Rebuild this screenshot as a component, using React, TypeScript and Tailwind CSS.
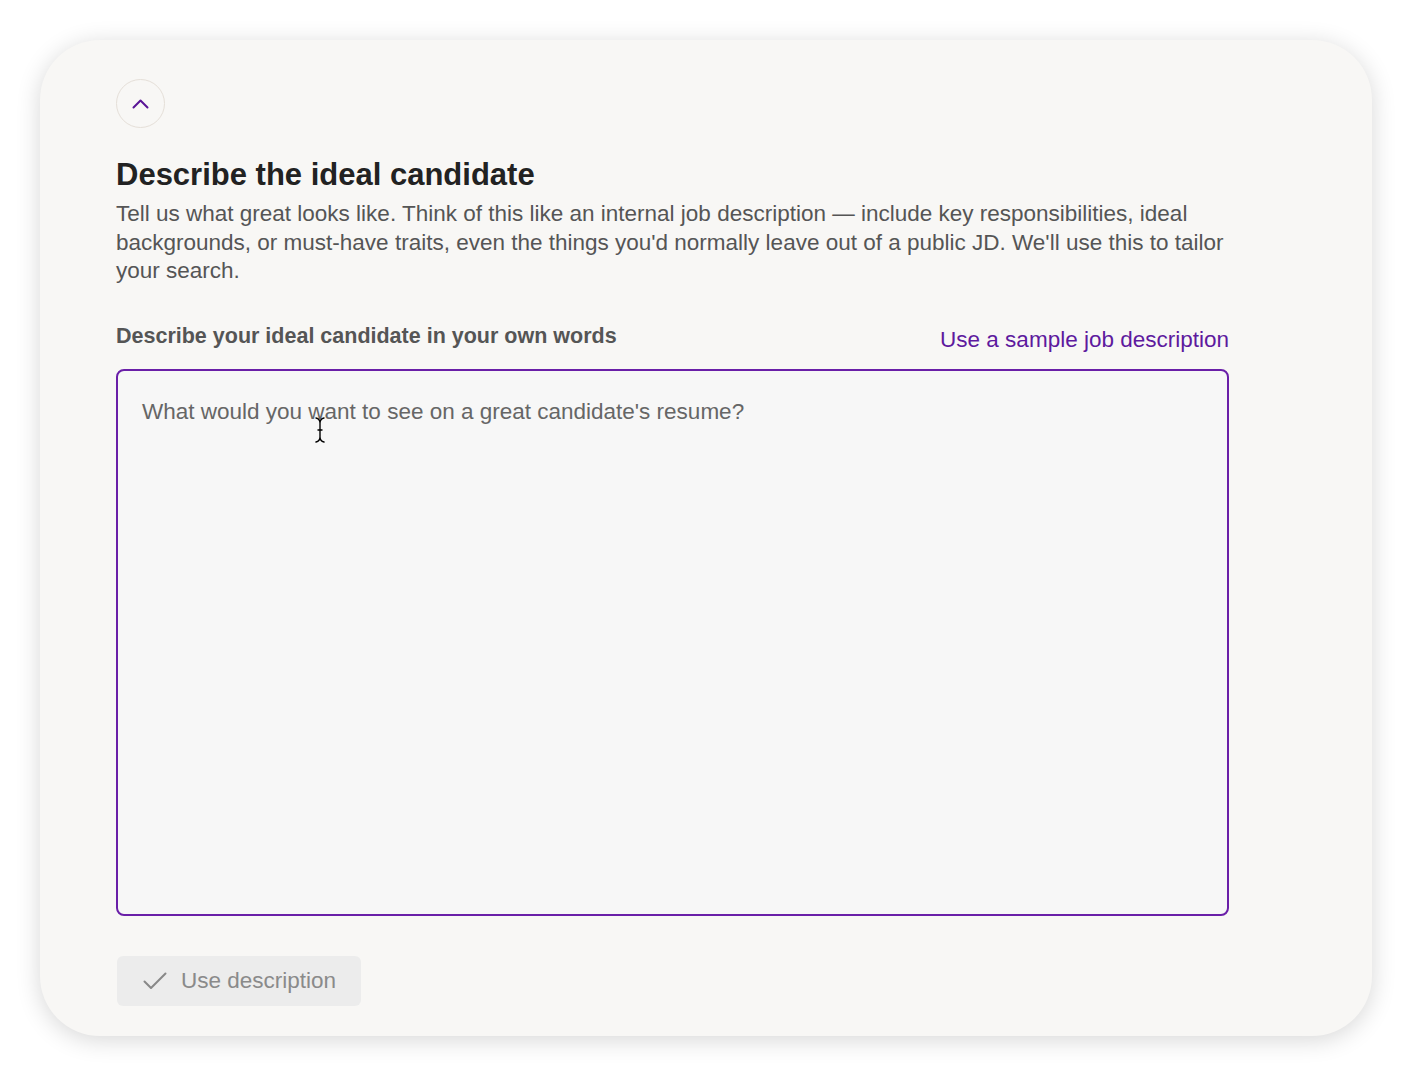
import React from "react";

export default function App() {
  return (
    <div className="min-h-[1076px] w-[1412px] bg-white p-[40px]" style={{ fontFamily: '"Liberation Sans", Arial, sans-serif' }}>
      <div className="relative h-[996px] w-[1332px] rounded-[60px] bg-[#f8f7f5] pl-[76px] pt-[39px] shadow-[0_4px_24px_rgba(0,0,0,0.16)]">
        <div className="w-[1113px]">
          <button className="flex h-[49px] w-[49px] items-center justify-center rounded-full border border-[#e5dfd8] bg-transparent">
            <svg width="17" height="10" viewBox="0 0 17 10" fill="none">
              <path d="M1.5 8.5 L8.5 1.5 L15.5 8.5" stroke="#5a1596" strokeWidth="2" strokeLinecap="round" strokeLinejoin="round" />
            </svg>
          </button>
          <h1 className="mt-[29px] text-[31px] font-bold leading-[36px] text-[#222]">Describe the ideal candidate</h1>
          <p className="mt-[7px] whitespace-nowrap text-[22.5px] leading-[28.5px] text-[#555]">
            Tell us what great looks like. Think of this like an internal job description — include key responsibilities, ideal
            <br />
            backgrounds, or must-have traits, even the things you'd normally leave out of a public JD. We'll use this to tailor
            <br />
            your search.
          </p>
          <div className="mt-[36px] flex items-end justify-between">
            <span className="text-[21.5px] font-bold leading-[28px] text-[#555]">Describe your ideal candidate in your own words</span>
            <a className="mb-[-4px] text-[22.5px] leading-[28px] text-[#5e1a9e]">Use a sample job description</a>
          </div>
          <div className="relative mt-[19px]">
            <textarea
              className="block h-[547px] w-[1113px] resize-none rounded-[8px] border-2 border-[#6a1fa8] bg-[#f7f7f7] px-[24px] pt-[27px] text-[22.5px] leading-[28px] text-[#333] outline-none placeholder:text-[#666]"
              placeholder="What would you want to see on a great candidate's resume?"
            />
            <svg className="pointer-events-none absolute left-[199px] top-[48px]" width="10" height="26" viewBox="0 0 10 26" fill="none">
              <path d="M1 1 Q5 2 5 6 Q5 2 9 1 M5 6 V20 Q5 24 1 25 M5 20 Q5 24 9 25 M3 13 H7" stroke="#000" strokeWidth="1.4" strokeLinecap="round" />
            </svg>
          </div>
          <button className="ml-[1px] mt-[40px] flex h-[50px] w-[244px] items-center gap-[14px] rounded-[6px] bg-[#ececec] pl-[26px] text-[22.5px] text-[#8a8a8a]">
            <svg width="24" height="18" viewBox="0 0 24 18" fill="none">
              <path d="M1.5 9.5 L8 16 L22.5 1.5" stroke="#888" strokeWidth="2" strokeLinecap="round" strokeLinejoin="round" />
            </svg>
            <span>Use description</span>
          </button>
        </div>
      </div>
    </div>
  );
}
